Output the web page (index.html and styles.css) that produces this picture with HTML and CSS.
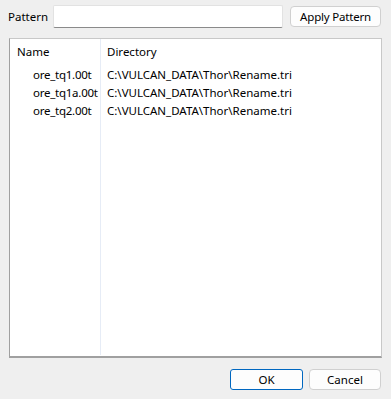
FILE: index.html
```html
<!DOCTYPE html>
<html>
<head>
<meta charset="utf-8">
<link rel="stylesheet" href="styles.css">
</head>
<body>
<div class="dialog">
  <div class="top-row">
    <span class="label">Pattern</span>
    <div class="input"></div>
    <div class="btn apply">Apply Pattern</div>
  </div>
  <div class="list">
    <div class="col col-name">
      <div class="head">Name</div>
      <div class="cell item">ore_tq1.00t</div>
      <div class="cell item">ore_tq1a.00t</div>
      <div class="cell item">ore_tq2.00t</div>
    </div>
    <div class="col col-dir">
      <div class="head">Directory</div>
      <div class="cell">C:\VULCAN_DATA\Thor\Rename.tri</div>
      <div class="cell">C:\VULCAN_DATA\Thor\Rename.tri</div>
      <div class="cell">C:\VULCAN_DATA\Thor\Rename.tri</div>
    </div>
  </div>
  <div class="bottom-row">
    <div class="btn ok">OK</div>
    <div class="btn cancel">Cancel</div>
  </div>
</div>
</body>
</html>
```
FILE: styles.css
```css
html, body {
  margin: 0;
  padding: 0;
  background: #efefef;
}
body {
  font-family: "Noto Sans", "Open Sans", sans-serif;
  font-size: 11.5px;
  color: #000;
  width: 391px;
  height: 399px;
  overflow: hidden;
}
.dialog {
  display: flex;
  flex-direction: column;
  padding: 5px 9px 0 9px;
}
.top-row {
  display: flex;
  align-items: center;
  height: 23px;
}
.label {
  margin-left: -1px;
  width: 45px;
}
.input {
  width: 230px;
  background: #fff;
  border: 1px solid #e2e2e2;
  border-bottom: 1px solid #8a8a8a;
  border-radius: 2px;
  box-sizing: border-box;
  height: 23px;
}
.btn {
  display: flex;
  align-items: center;
  justify-content: center;
  box-sizing: border-box;
  background: #fdfdfd;
  border: 1px solid #d0d0d0;
  border-radius: 4px;
  height: 21px;
}
.apply {
  margin-left: 7px;
  width: 91px;
  letter-spacing: -0.2px;
}
.list {
  margin-top: 10px;
  height: 320px;
  width: 373px;
  box-sizing: border-box;
  background: #fff;
  border: 1px solid #c8c8c8;
  border-left-color: #a0a0a0;
  border-bottom: 2px solid #a0a0a0;
  display: flex;
}
.col {
  display: flex;
  flex-direction: column;
  margin-bottom: 1px;
}
.col-name {
  width: 91px;
  border-right: 1px solid #e6ecf6;
  padding-left: 7px;
  box-sizing: border-box;
}
.col-dir {
  padding-left: 6px;
}
.head {
  height: 16px;
  margin-top: 5px;
  margin-bottom: 6px;
  line-height: 16px;
}
.cell {
  height: 18px;
  line-height: 18px;
}
.item {
  padding-left: 16px;
  letter-spacing: -0.25px;
}
.bottom-row {
  display: flex;
  justify-content: flex-end;
  gap: 6px;
  margin-top: 11px;
  padding-right: 1px;
}
.ok {
  width: 73px;
  border: 1px solid #0067c0;
  border-radius: 3px;
}
.cancel {
  width: 72px;
}
```
